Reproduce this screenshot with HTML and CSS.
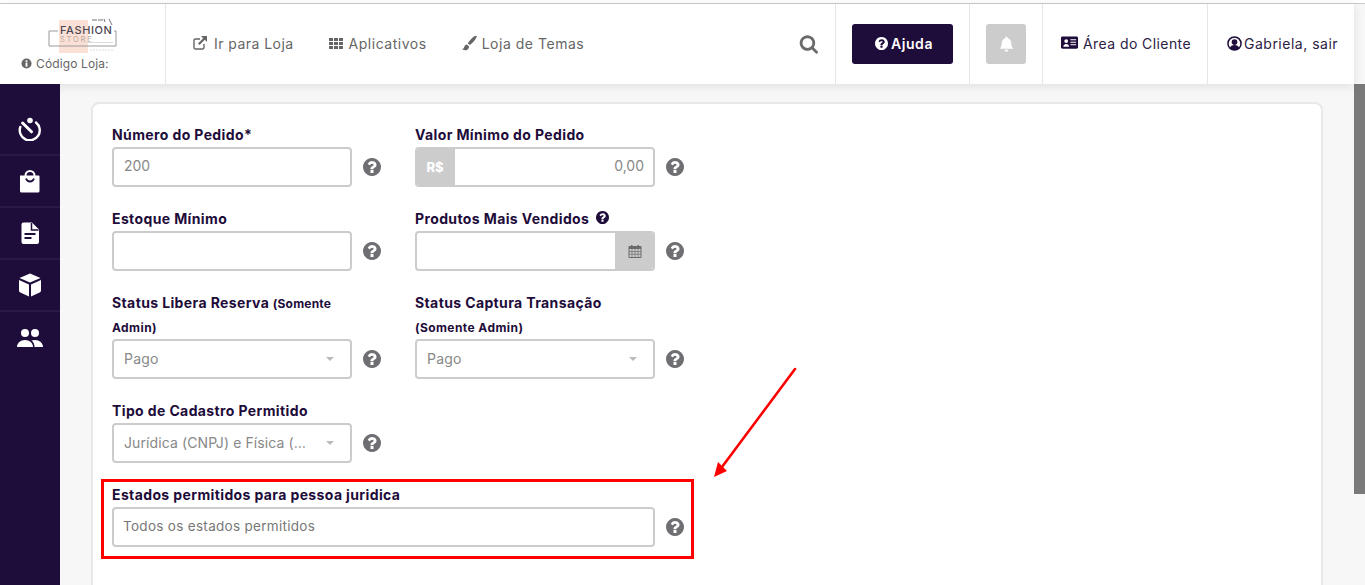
FILE: index.html
```html
<!DOCTYPE html>
<html lang="pt-BR">
<head>
<meta charset="utf-8">
<title>Configurações da Loja</title>
<link rel="stylesheet" href="styles.css">
</head>
<body>
<svg class="defs" width="0" height="0" aria-hidden="true">
  <symbol id="q" viewBox="0 0 1536 1536"><path d="M896 1248v-192q0-14-9-23t-23-9h-192q-14 0-23 9t-9 23v192q0 14 9 23t23 9h192q14 0 23-9t9-23zm256-672q0-88-55.500-163t-138.500-116-170-41q-243 0-371 213-15 24 8 42l132 100q7 6 19 6 16 0 25-12 53-68 86-92 34-24 86-24 48 0 85.500 26t37.500 59q0 38-20 61t-68 45q-63 28-115.500 86.500t-52.500 125.500v36q0 14 9 23t23 9h192q14 0 23-9t9-23q0-19 21.500-49.500t54.500-49.500q32-18 49-28.500t46-35 44.500-48 28-60.500 12.500-81zm384 192q0 209-103 385.500t-279.500 279.500-385.500 103-385.500-103-279.500-279.500-103-385.500 103-385.500 279.500-279.500 385.500-103 385.500 103 279.500 279.500 103 385.500z"/></symbol>
</svg>
<div class="topline"></div>
<div class="shell">
  <div class="page">
    <header class="header">
      <div class="brand">
        <svg class="logo" viewBox="0 0 72 40" width="72" height="40">
          <rect x="13" y="4" width="29" height="33" fill="#fbe0d6"/>
          <path d="M12 15H3V30H70V15H68" fill="none" stroke="#9a9a9a" stroke-width="1"/>
          <path d="M38 26.500H67" stroke="#ddd" stroke-width="1"/>
          <path d="M46 4h5M52 4h5M58 3l1 3M63 3l3 6" stroke="#77707c" stroke-width="1" fill="none"/>
          <path d="M44 34h23" stroke="#ddd" stroke-width="1" stroke-dasharray="2 1"/>
          <text x="14" y="18" class="logo-main">FASHION</text>
          <text x="14" y="26" class="logo-sub">STORE</text>
        </svg>
        <div class="code"><svg class="ico-xs" viewBox="0 0 24 24"><circle cx="12" cy="12" r="11" fill="#666"/><rect x="10" y="10" width="4" height="9" fill="#fff"/><rect x="10" y="5" width="4" height="3.500" fill="#fff"/></svg>Código Loja:</div>
      </div>
      <nav class="nav">
        <a class="nav-link"><svg class="ico" viewBox="0 0 16 16"><path d="M12 9v3.500a1.500 1.500 0 0 1-1.500 1.500h-7A1.500 1.500 0 0 1 2 12.500v-7A1.500 1.500 0 0 1 3.500 4H8" fill="none" stroke="#666" stroke-width="1.400"/><path d="M9 1h6v6l-2.200-2.200L7.500 10 6 8.500l5.200-5.300z" fill="#666"/></svg>Ir para Loja</a>
        <a class="nav-link nav-tight"><svg class="ico" viewBox="0 0 16 16"><path d="M1 3h4v3H1zM6 3h4v3H6zM11 3h4v3h-4zM1 7h4v3H1zM6 7h4v3H6zM11 7h4v3h-4zM1 11h4v3H1zM6 11h4v3H6zM11 11h4v3h-4z" fill="#666"/></svg>Aplicativos</a>
        <a class="nav-link nav-tight"><svg class="ico" viewBox="0 0 16 16"><path d="M15.500 1c-.6-.6-1.500-.3-2.500.4C11 3 8.500 5.500 6.800 8.200l2 1.800c2.700-1.900 5-4.600 6.200-6.700.6-1 .9-1.800.5-2.300zM5.800 9.500C3.500 9.700 3.500 12 2.800 13c-.4.600-1.300 1-1.800 1 1 1 3 1.500 4.800.9 1.700-.6 2.600-2.200 2-3.800z" fill="#666"/></svg>Loja de Temas</a>
      </nav>
      <div class="search"><svg class="ico-search" viewBox="0 128 1728 1664"><path d="M1216 832q0-185-131.500-316.500t-316.500-131.500-316.500 131.500-131.500 316.500 131.500 316.500 316.500 131.500 316.500-131.500 131.500-316.500zm512 832q0 52-38 90t-90 38q-54 0-90-38l-343-342q-179 124-399 124-143 0-273.500-55.500t-225-150-150-225-55.500-273.500 55.500-273.500 150-225 225-150 273.500-55.500 273.500 55.500 225 150 150 225 55.500 273.500q0 220-124 399l343 343q37 37 37 90z" fill="#6b6b6b"/></svg></div>
      <div class="cell cell-help"><a class="btn-help"><svg class="ico-q-sm"><use href="#q"/></svg>Ajuda</a></div>
      <div class="cell cell-bell"><span class="btn-bell"><svg viewBox="0 0 16 16" width="17" height="18"><path d="M8 1a1 1 0 0 1 1 1v.6c2.200.5 3.500 2.300 3.500 4.600 0 2.800.8 3.800 2 5.300H1.500c1.200-1.500 2-2.500 2-5.300 0-2.300 1.300-4.100 3.500-4.600V2a1 1 0 0 1 1-1zM6.200 13.500h3.600a1.800 1.800 0 0 1-3.600 0z" fill="#fff"/></svg></span></div>
      <div class="cell cell-client"><svg class="ico-card" viewBox="0 0 18 14"><rect width="18" height="13" rx="1.500" fill="#1e0c3a"/><circle cx="5.500" cy="5" r="2" fill="#fff"/><path d="M2.500 11c0-2 1.300-3 3-3s3 1 3 3z" fill="#fff"/><path d="M10 3.500h6M10 6.200h6M10 8.900h6" stroke="#fff" stroke-width="1.200"/></svg>Área do Cliente</div>
      <div class="cell cell-user"><svg class="ico-user" viewBox="0 0 16 16"><circle cx="8" cy="8" r="7" fill="none" stroke="#1e0c3a" stroke-width="1.600"/><circle cx="8" cy="6.500" r="3" fill="#1e0c3a"/><path d="M3 13c.6-2.500 2.600-3.500 5-3.500s4.400 1 5 3.500c-1.300 1.200-3 2-5 2s-3.700-.8-5-2z" fill="#1e0c3a"/></svg>Gabriela, sair</div>
    </header>
    <div class="body">
      <aside class="sidebar">
        <a class="side-item"><svg viewBox="0 0 24 24" width="24" height="24"><circle cx="12" cy="3.500" r="2.800" fill="#fff"/><path d="M4.600 6 13.500 14.800" stroke="#fff" stroke-width="3" stroke-linecap="round"/><path d="M18 5.500A10 10 0 1 1 2.300 10" fill="none" stroke="#fff" stroke-width="2.400" stroke-linecap="round"/></svg></a>
        <a class="side-item"><svg viewBox="0 0 24 24" width="24" height="24"><circle cx="12" cy="6.500" r="4.500" fill="none" stroke="#fff" stroke-width="2"/><path d="M3.500 6.500h17a1 1 0 0 1 1 1V22a1.500 1.500 0 0 1-1.500 1.500H3.500A1.500 1.500 0 0 1 2 22V7.500a1 1 0 0 1 1.500-1z" fill="#fff"/><path d="M8 9.500c.7 2 2.200 3 4 3s3.300-1 4-3" fill="none" stroke="#1e0c3a" stroke-width="1.800"/></svg></a>
        <a class="side-item"><svg viewBox="0 0 24 24" width="24" height="24"><path d="M5.500 1.500H14L21 8.500V21a2 2 0 0 1-2 2H5.500a2 2 0 0 1-2-2V3.500a2 2 0 0 1 2-2z" fill="#fff"/><path d="M13.500 2V9H20.500" fill="none" stroke="#1e0c3a" stroke-width="1.500"/><path d="M6.500 13h11M6.500 17h7" stroke="#1e0c3a" stroke-width="2"/></svg></a>
        <a class="side-item"><svg viewBox="0 0 24 24" width="24" height="24"><path d="M12 .5 22.500 5 12 9.500 1.500 5z" fill="#fff"/><path d="M1 7 11 11.500V23.500L2.300 19.500A2 2 0 0 1 1 17.700zM23 7 13 11.500V23.500L21.700 19.500A2 2 0 0 0 23 17.700z" fill="#fff"/></svg></a>
        <a class="side-item"><svg viewBox="0 0 28 20" width="28" height="20"><circle cx="9" cy="5" r="4" fill="#fff"/><circle cx="19" cy="5" r="4" fill="#fff"/><path d="M1 19c0-4 3.500-7 8-7s8 3 8 7z" fill="#fff"/><path d="M18.500 19c0-2.800-1-5-3-6.500 1-.4 2.200-.6 3.500-.6 4.500 0 8 3 8 7.100z" fill="#fff"/></svg></a>
      </aside>
      <main class="main">
        <section class="card">
          <div class="row">
            <div class="col">
              <label class="label">Número do Pedido*</label>
              <div class="control"><div class="input">200</div><svg class="help"><use href="#q"/></svg></div>
            </div>
            <div class="col">
              <label class="label">Valor Mínimo do Pedido</label>
              <div class="control"><div class="group"><span class="addon addon-money">R$</span><div class="group-value">0,00</div></div><svg class="help"><use href="#q"/></svg></div>
            </div>
          </div>
          <div class="row">
            <div class="col">
              <label class="label">Estoque Mínimo</label>
              <div class="control"><div class="input"></div><svg class="help"><use href="#q"/></svg></div>
            </div>
            <div class="col">
              <label class="label">Produtos Mais Vendidos <svg class="help-label"><use href="#q"/></svg></label>
              <div class="control"><div class="group"><div class="group-value"></div><span class="addon addon-date"><svg viewBox="0 0 14 14" width="14" height="14"><path d="M1 2.500h12V13.500H1z" fill="none" stroke="#6b6b6b" stroke-width="1"/><path d="M1 2.500h12V5H1zM3 1h1.500v2.500H3zM9.500 1H11v2.500H9.500z" fill="#6b6b6b"/><path d="M1 7.500h12M1 10.200h12M4 5v8M7 5v8M10 5v8" stroke="#6b6b6b" stroke-width=".7"/></svg></span></div><svg class="help"><use href="#q"/></svg></div>
            </div>
          </div>
          <div class="row">
            <div class="col">
              <label class="label">Status Libera Reserva <small class="note note-first">(Somente</small> <small class="note">Admin)</small></label>
              <div class="control"><div class="input select"><span class="select-text">Pago</span><i class="caret"></i></div><svg class="help"><use href="#q"/></svg></div>
            </div>
            <div class="col">
              <label class="label">Status Captura Transação <small class="note">(Somente Admin)</small></label>
              <div class="control"><div class="input select"><span class="select-text">Pago</span><i class="caret"></i></div><svg class="help"><use href="#q"/></svg></div>
            </div>
          </div>
          <div class="row">
            <div class="col">
              <label class="label">Tipo de Cadastro Permitido</label>
              <div class="control"><div class="input select"><span class="select-text select-cut">Jurídica (CNPJ) e Física (…</span><i class="caret"></i></div><svg class="help"><use href="#q"/></svg></div>
            </div>
          </div>
          <div class="row">
            <div class="col-wide">
              <label class="label">Estados permitidos para pessoa juridica</label>
              <div class="control"><div class="input input-wide"><span class="placeholder">Todos os estados permitidos</span></div><svg class="help"><use href="#q"/></svg></div>
            </div>
          </div>
        </section>
      </main>
    </div>
  </div>
  <div class="scrollbar"><div class="thumb"></div></div>
  <div class="mark-box"></div>
  <svg class="mark-arrow" viewBox="0 0 90 116" width="90" height="116"><path d="M85 4 12 102" stroke="#f00" stroke-width="2.600" stroke-linecap="round"/><path d="M4 112 8 97 17 106z" fill="#f00"/></svg>
</div>
</body>
</html>
```
FILE: styles.css
```css
* { box-sizing: border-box; }
html, body { margin: 0; height: 585px; overflow: hidden; }
body { font-family: Inter, "Noto Sans", sans-serif; font-size: 14px; background: #fff; color: #1e0c3a; }
.defs { position: absolute; }
.topline { height: 4px; border-bottom: 1px solid #ccc; background: #fff; }
.shell { position: relative; display: flex; height: 581px; }
.page { flex: 1; min-width: 0; display: flex; flex-direction: column; }

/* Header */
.header { position: relative; display: flex; height: 80px; flex: none; background: #fff; box-shadow: 0 2px 10px rgba(0,0,0,.1); }
.brand { width: 166px; flex: none; border-right: 1px solid #e6e6e6; padding-top: 12px; display: flex; flex-direction: column; align-items: flex-start; }
.logo { display: block; margin-left: 46px; }
.logo-main { font-size: 11px; font-weight: 500; fill: #4b4652; letter-spacing: .6px; }
.logo-sub { font-size: 7.500px; fill: #b9aaa4; letter-spacing: 1.800px; }
.code { display: flex; align-items: center; gap: 4px; margin-left: 21px; font-size: 12px; line-height: 15px; color: #666; letter-spacing: .12px; white-space: nowrap; }
.ico-xs { width: 11px; height: 11px; }
.nav { display: flex; align-items: center; gap: 34px; padding: 0 0 2px 26px; flex: 1; }
.nav-link { display: flex; align-items: center; gap: 6px; font-size: 14px; color: #666; white-space: nowrap; letter-spacing: .45px; }
.nav-tight { gap: 5px; letter-spacing: .52px; }
.ico { width: 16px; height: 16px; flex: none; }
.search { width: 36px; display: flex; align-items: center; flex: none; }
.ico-search { width: 19px; height: 19px; }
.cell { display: flex; align-items: center; border-left: 1px solid #e6e6e6; flex: none; white-space: nowrap; }
.cell-help { width: 134px; padding-left: 16px; }
.btn-help { display: flex; align-items: center; justify-content: center; gap: 3px; width: 101px; height: 40px; padding: 0 0 2px 3px; border-radius: 3px; background: #1e0c3a; color: #fff; font-weight: 600; font-size: 14px; letter-spacing: .6px; }
.ico-q-sm { width: 13px; height: 13px; fill: #fff; }
.cell-bell { width: 73px; padding-left: 16px; }
.btn-bell { display: flex; align-items: center; justify-content: center; width: 40px; height: 40px; border-radius: 3px; background: #ccc; }
.cell-client { width: 165px; padding: 0 0 2px 18px; gap: 5px; font-size: 14px; letter-spacing: .42px; color: #2d2045; }
.ico-card { width: 17px; height: 14px; flex: none; }
.cell-user { width: 147px; padding: 0 0 2px 19px; gap: 2px; font-size: 14px; letter-spacing: .5px; color: #2d2045; }
.ico-user { width: 15px; height: 15px; flex: none; }

/* Body */
.body { flex: 1; display: flex; min-height: 0; }
.sidebar { position: relative; width: 60px; flex: none; background: #1e0c3a; padding-top: 20px; }
.side-item { display: flex; align-items: center; justify-content: center; height: 52px; border-bottom: 2px solid #2a1946; }
.side-item:last-child { border-bottom: 0; }
.main { flex: 1; min-width: 0; background: #f7f7f7; padding: 18px 31px 0; overflow: hidden; }
.card { min-height: 600px; background: #fff; border: 2px solid #e8e8e8; border-radius: 8px; padding: 19px; }

/* Form */
.row { display: flex; margin-bottom: 20px; }
.col { width: 303px; flex: none; }
.col .label { width: 240px; }
.col-wide { width: 600px; }
.label { display: block; font-size: 14px; line-height: 24px; font-weight: 700; color: #1e0c3a; letter-spacing: .38px; }
.note { font-size: 12px; line-height: 1; font-weight: 700; letter-spacing: .42px; }
.note-first { letter-spacing: .2px; }
.control { display: flex; align-items: center; gap: 11px; }
.input { width: 240px; height: 40px; flex: none; border: 2px solid #ccc; border-radius: 4px; background: #fff; padding: 0 10px; line-height: 34px; color: #888; font-size: 14px; }
.input-wide { width: 543px; padding-left: 9px; }
.placeholder { font-size: 13.500px; letter-spacing: .3px; color: #777; }
.select { display: flex; align-items: center; gap: 8px; padding-bottom: 1px; }
.select-text { flex: none; white-space: nowrap; letter-spacing: .2px; }
.select-cut { letter-spacing: .1px; }
.caret { margin-left: auto; margin-right: 6px; flex: none; width: 0; height: 0; border-left: 4.500px solid transparent; border-right: 4.500px solid transparent; border-top: 4px solid #bbb; }
.group { width: 240px; height: 40px; flex: none; display: flex; border-radius: 4px; overflow: hidden; border: 2px solid #ccc; background: #fff; }
.group-value { flex: 1; text-align: right; line-height: 34px; padding-right: 9px; color: #888; }
.addon { display: flex; align-items: center; justify-content: center; flex: none; background: #ccc; }
.addon-money { width: 40px; margin: -2px 0 -2px -2px; color: #fff; font-weight: 800; font-size: 13px; }
.addon-date { width: 40px; margin: -2px -2px -2px 0; }
.help { width: 18px; height: 18px; fill: #6f6f73; flex: none; }
.help-label { width: 13px; height: 13px; margin-left: 3px; fill: #1e0c3a; vertical-align: 0; }

/* Scrollbar */
.scrollbar { width: 11px; flex: none; background: #f7f7f7; padding-top: 80px; }
.thumb { height: 410px; background: #7a7a7a; }

/* Annotation */
.mark-box { position: absolute; left: 101px; top: 475px; width: 593px; height: 80px; border: 3px solid #f00; }
.mark-arrow { position: absolute; left: 710px; top: 361px; }
```
